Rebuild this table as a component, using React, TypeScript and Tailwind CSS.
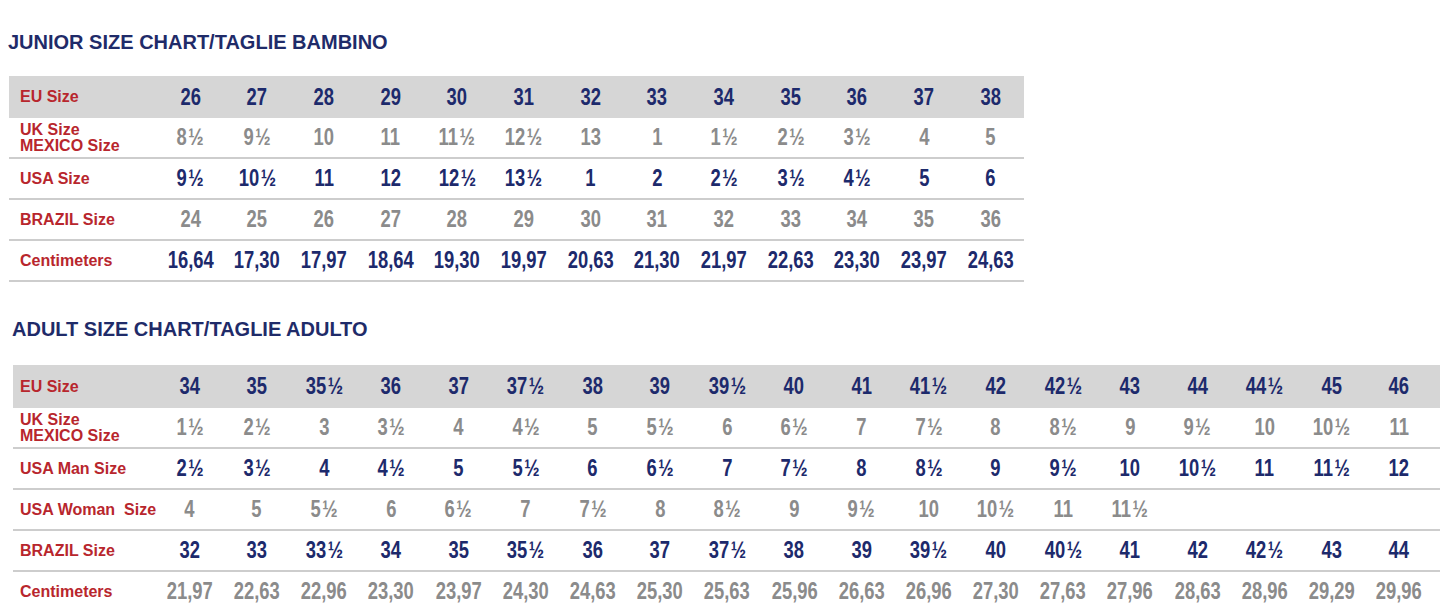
import React from "react";

type Tone = "navy" | "gray";

type Row = {
    label: string[];
    values: string[];
    tone: Tone;
};

const junior: Row[] = [
    { label: ["EU Size"], tone: "navy", values: ["26", "27", "28", "29", "30", "31", "32", "33", "34", "35", "36", "37", "38"] },
    { label: ["UK Size", "MEXICO Size"], tone: "gray", values: ["8½", "9½", "10", "11", "11½", "12½", "13", "1", "1½", "2½", "3½", "4", "5"] },
    { label: ["USA Size"], tone: "navy", values: ["9 ½", "10 ½", "11", "12", "12½", "13½", "1", "2", "2½", "3 ½", "4 ½", "5", "6"] },
    { label: ["BRAZIL Size"], tone: "gray", values: ["24", "25", "26", "27", "28", "29", "30", "31", "32", "33", "34", "35", "36"] },
    { label: ["Centimeters"], tone: "navy", values: ["16,64", "17,30", "17,97", "18,64", "19,30", "19,97", "20,63", "21,30", "21,97", "22,63", "23,30", "23,97", "24,63"] },
];

const adult: Row[] = [
    { label: ["EU Size"], tone: "navy", values: ["34", "35", "35 ½", "36", "37", "37½", "38", "39", "39 ½", "40", "41", "41 ½", "42", "42½", "43", "44", "44½", "45", "46"] },
    { label: ["UK Size", "MEXICO Size"], tone: "gray", values: ["1 ½", "2 ½", "3", "3 ½", "4", "4½", "5", "5 ½", "6", "6 ½", "7", "7 ½", "8", "8½", "9", "9½", "10", "10 ½", "11"] },
    { label: ["USA Man Size"], tone: "navy", values: ["2 ½", "3 ½", "4", "4 ½", "5", "5 ½", "6", "6 ½", "7", "7 ½", "8", "8 ½", "9", "9½", "10", "10 ½", "11", "11 ½", "12"] },
    { label: ["USA Woman  Size"], tone: "gray", values: ["4", "5", "5 ½", "6", "6 ½", "7", "7 ½", "8", "8½", "9", "9½", "10", "10½", "11", "11½", "", "", "", ""] },
    { label: ["BRAZIL Size"], tone: "navy", values: ["32", "33", "33½", "34", "35", "35½", "36", "37", "37 ½", "38", "39", "39½", "40", "40½", "41", "42", "42½", "43", "44"] },
    { label: ["Centimeters"], tone: "gray", values: ["21,97", "22,63", "22,96", "23,30", "23,97", "24,30", "24,63", "25,30", "25,63", "25,96", "26,63", "26,96", "27,30", "27,63", "27,96", "28,63", "28,96", "29,29", "29,96"] },
];

// the chart uses a condensed bold face; squeeze Arial-metric bold to match
function Size({ value }: { value: string }) {
    const half = value.includes("½");
    const whole = value.replace("½", "").trim();
    return (
        <span className="inline-block scale-x-[0.8] whitespace-nowrap">
            {whole}
            {half && <span className="ml-[2px]">½</span>}
        </span>
    );
}

function SizeTable({ rows, cols, inset, head }: { rows: Row[]; cols: string; inset: string; head: string }) {
    return (
        <div className="flex flex-col">
            {rows.map((row, i) => (
                <div
                    key={i}
                    className={`grid items-center ${cols} ${
                        i === 0 ? `${head} bg-[#d6d6d6]` : "h-[41px] border-b-2 border-[#cdcdcd]"
                    }`}
                >
                    <div
                        className={`${inset} whitespace-pre font-['Liberation_Sans',Arial,sans-serif] text-[16px] font-bold leading-[16px] text-[#b8262d]`}
                    >
                        {row.label.map((l) => (
                            <div key={l}>{l}</div>
                        ))}
                    </div>
                    {row.values.map((v, j) => (
                        <div
                            key={j}
                            className={`text-center font-['Liberation_Sans',Arial,sans-serif] text-[23px] font-bold leading-none ${
                                row.tone === "navy" ? "text-[#1d2a6c]" : "text-[#8b8b8b]"
                            }`}
                        >
                            {v && <Size value={v} />}
                        </div>
                    ))}
                </div>
            ))}
        </div>
    );
}

export default function App() {
    return (
        <main className="h-[611px] w-[1440px] overflow-hidden bg-white">
            <section className="pl-[9px] pr-[416px] pt-[30px]">
                <h2 className="-ml-[1px] font-['Liberation_Sans',Arial,sans-serif] text-[20px] font-bold leading-[24px] text-[#1f2b69]">
                    JUNIOR SIZE CHART/TAGLIE BAMBINO
                </h2>
                <div className="mt-[22px]">
                    <SizeTable rows={junior} cols="grid-cols-[148px_repeat(13,1fr)]" inset="pl-[11px]" head="h-[42px]" />
                </div>
            </section>
            <section className="pl-[13px] pt-[35px]">
                <h2 className="-ml-[1px] font-['Liberation_Sans',Arial,sans-serif] text-[20px] font-bold leading-[24px] text-[#1f2b69]">
                    ADULT SIZE CHART/TAGLIE ADULTO
                </h2>
                <div className="mt-[24px]">
                    <SizeTable rows={adult} cols="grid-cols-[143px_repeat(19,67.2px)_1fr]" inset="pl-[7px]" head="h-[43px]" />
                </div>
            </section>
        </main>
    );
}
